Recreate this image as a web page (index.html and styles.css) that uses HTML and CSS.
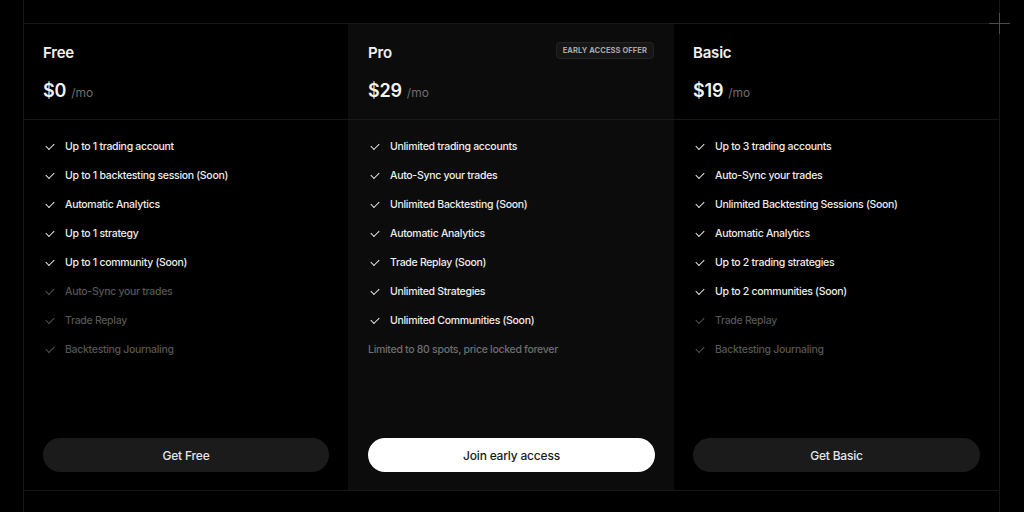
FILE: index.html
```html
<!DOCTYPE html>
<html>
<head>
<meta charset="utf-8">
<link rel="stylesheet" href="styles.css">
</head>
<body>
<div class="frame">
  <span class="cross"></span>
  <div class="grid">
    <section class="plan">
      <header class="plan-head">
        <div class="title-row"><h2>Free</h2></div>
        <div class="price"><span class="amount">$0</span><span class="per">/mo</span></div>
      </header>
      <ul class="features">
        <li><span class="chk"></span>Up to 1 trading account</li>
        <li><span class="chk"></span>Up to 1 backtesting session (Soon)</li>
        <li><span class="chk"></span>Automatic Analytics</li>
        <li><span class="chk"></span>Up to 1 strategy</li>
        <li><span class="chk"></span>Up to 1 community (Soon)</li>
        <li class="off"><span class="chk"></span>Auto-Sync your trades</li>
        <li class="off"><span class="chk"></span>Trade Replay</li>
        <li class="off"><span class="chk"></span>Backtesting Journaling</li>
      </ul>
      <div class="cta"><button class="btn">Get Free</button></div>
    </section>
    <section class="plan pro">
      <header class="plan-head">
        <div class="title-row"><h2>Pro</h2><span class="badge">EARLY ACCESS OFFER</span></div>
        <div class="price"><span class="amount">$29</span><span class="per">/mo</span></div>
      </header>
      <ul class="features">
        <li><span class="chk"></span>Unlimited trading accounts</li>
        <li><span class="chk"></span>Auto-Sync your trades</li>
        <li><span class="chk"></span>Unlimited Backtesting (Soon)</li>
        <li><span class="chk"></span>Automatic Analytics</li>
        <li><span class="chk"></span>Trade Replay (Soon)</li>
        <li><span class="chk"></span>Unlimited Strategies</li>
        <li><span class="chk"></span>Unlimited Communities (Soon)</li>
        <li class="note">Limited to 80 spots, price locked forever</li>
      </ul>
      <div class="cta"><button class="btn btn-primary">Join early access</button></div>
    </section>
    <section class="plan">
      <header class="plan-head">
        <div class="title-row"><h2>Basic</h2></div>
        <div class="price"><span class="amount">$19</span><span class="per">/mo</span></div>
      </header>
      <ul class="features">
        <li><span class="chk"></span>Up to 3 trading accounts</li>
        <li><span class="chk"></span>Auto-Sync your trades</li>
        <li><span class="chk"></span>Unlimited Backtesting Sessions (Soon)</li>
        <li><span class="chk"></span>Automatic Analytics</li>
        <li><span class="chk"></span>Up to 2 trading strategies</li>
        <li><span class="chk"></span>Up to 2 communities (Soon)</li>
        <li class="off"><span class="chk"></span>Trade Replay</li>
        <li class="off"><span class="chk"></span>Backtesting Journaling</li>
      </ul>
      <div class="cta"><button class="btn">Get Basic</button></div>
    </section>
  </div>
</div>
</body>
</html>
```

FILE: styles.css
```css
* { box-sizing: border-box; }
html, body { margin: 0; padding: 0; background: #000; }
body {
  font-family: Inter, "Noto Sans", sans-serif;
  color: #f2f2f2;
  width: 1024px;
  height: 512px;
  overflow: hidden;
}
.frame {
  position: relative;
  margin-left: 23px;
  width: 977px;
  height: 512px;
  padding-top: 23px;
  border-left: 1px solid #161616;
  border-right: 1px solid #161616;
}
.cross {
  position: absolute;
  top: 13px;
  right: -11px;
  width: 21px;
  height: 21px;
}
.cross::before, .cross::after {
  content: "";
  position: absolute;
  background: #4a4a4a;
}
.cross::before { left: 0; right: 0; top: 10px; height: 1px; }
.cross::after { top: 0; bottom: 0; left: 10px; width: 1px; }
.grid {
  display: grid;
  grid-template-columns: 324px 326px 325px;
  height: 468px;
  border-top: 1px solid #161616;
  border-bottom: 1px solid #161616;
}
.plan {
  display: flex;
  flex-direction: column;
}
.pro { background: #0c0c0c; }
.plan-head {
  height: 96px;
  border-bottom: 1px solid #161616;
  padding: 17px 20px 0 19px;
}
.pro .plan-head { padding-left: 20px; border-bottom-color: #1a1a1a; }
.title-row {
  display: flex;
  align-items: center;
  justify-content: space-between;
  height: 22px;
}
h2 {
  margin: 0;
  font-size: 15px;
  font-weight: 600;
  letter-spacing: -0.2px;
  color: #f0f0f0;
}
.badge {
  font-size: 7.5px;
  font-weight: 700;
  letter-spacing: 0.1px;
  color: #a8a8a8;
  background: #161616;
  border: 1px solid #242424;
  border-radius: 4px;
  padding: 4px 6px 3px;
  line-height: 8px;
  margin-top: -4px;
}
.price {
  margin-top: 17px;
  display: flex;
  align-items: baseline;
  gap: 5px;
}
.amount { font-size: 18px; font-weight: 600; letter-spacing: -0.2px; color: #f2f2f2; }
.per { font-size: 12px; color: #6e6e6e; }
.features {
  list-style: none;
  margin: 0;
  padding: 12px 20px 0 21px;
  flex: 1;
}
.pro .features { padding-left: 22px; }
.features li {
  display: flex;
  align-items: center;
  height: 29px;
  font-size: 10.5px;
  font-weight: 500;
  color: #ececec;
  letter-spacing: -0.3px;
}
.features li.off { color: #555; }
.features li.note { color: #6e6e6e; padding-left: 0; margin-left: -2px; }
.chk {
  width: 8px;
  height: 5px;
  margin: 0 11px 2px 1px;
  border-left: 1.4px solid currentColor;
  border-bottom: 1.4px solid currentColor;
  transform: rotate(-45deg);
  flex: none;
}
.cta { padding: 0 19px 18px 19px; }
.pro .cta { padding-left: 20px; padding-right: 19px; }
.btn {
  width: 100%;
  height: 34px;
  border: none;
  border-radius: 17px;
  background: #1b1b1b;
  color: #e6e6e6;
  font-family: Inter, "Noto Sans", sans-serif;
  font-size: 12px;
  font-weight: 500;
  letter-spacing: -0.2px;
}
.btn-primary { background: #fff; color: #1a1a1a; }
```
